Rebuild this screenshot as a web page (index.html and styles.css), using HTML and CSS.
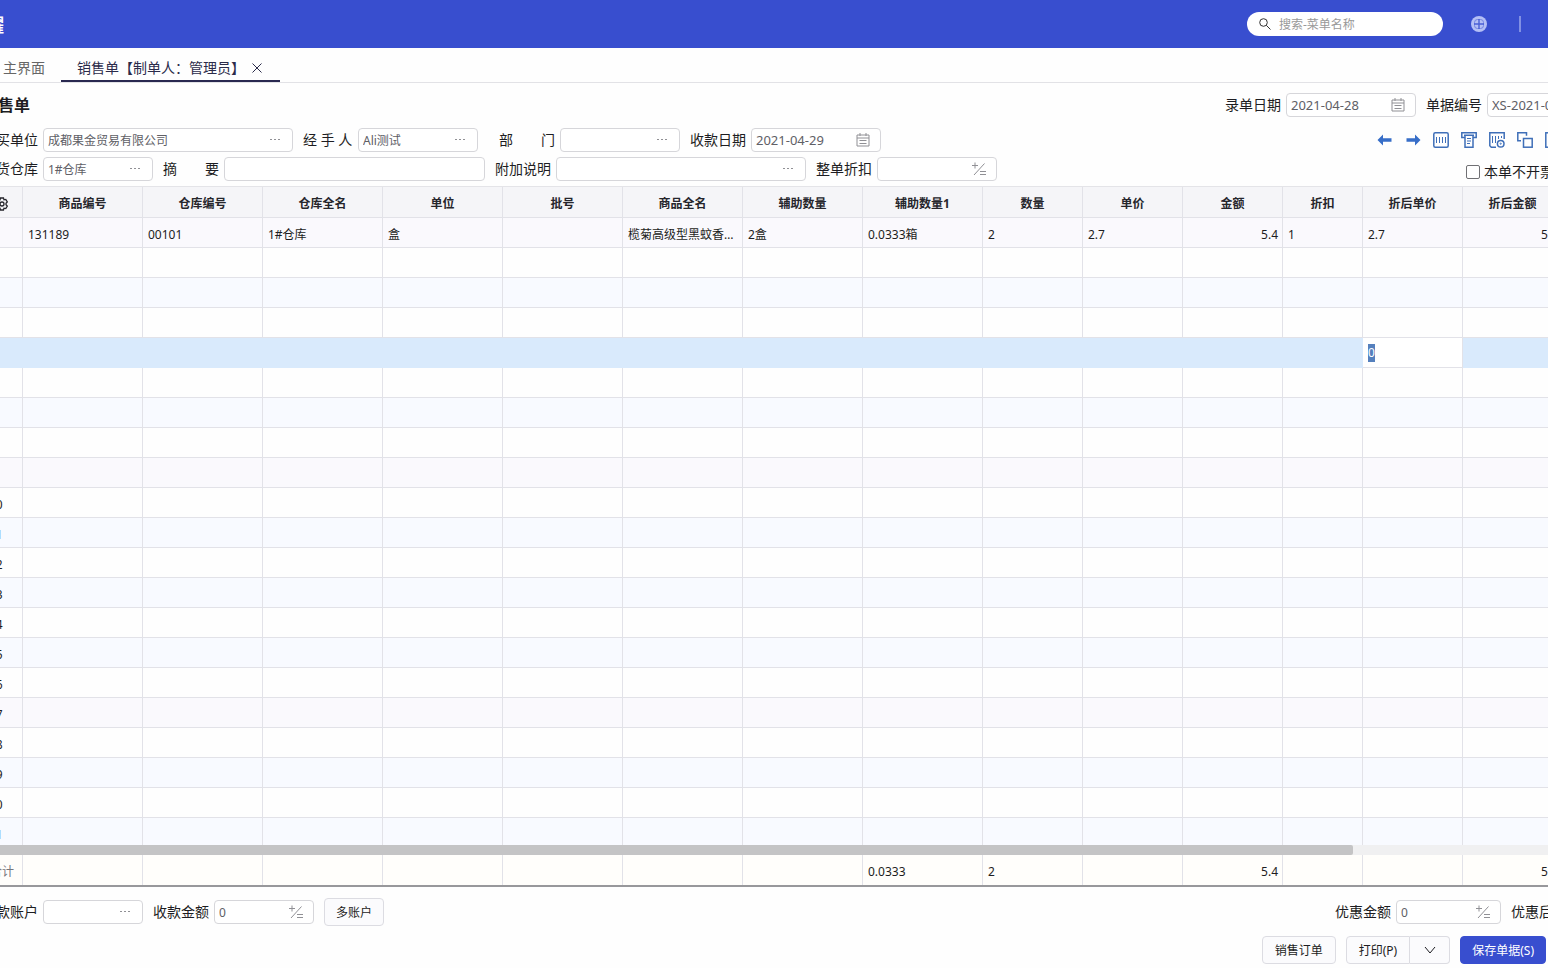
FILE: index.html
```html
<!DOCTYPE html>
<html lang="zh-CN">
<head>
<meta charset="utf-8">
<title>销售单</title>
<link rel="stylesheet" href="styles.css">
</head>
<body>
<svg class="sprite" aria-hidden="true">
  <symbol id="calendar" viewBox="0 0 14 14"><path d="M1 2h12v11H1zM1 5h12M4 0v3M10 0v3M3.500 7.500h7M3.500 10.500h7"/></symbol>
  <symbol id="calc" viewBox="0 0 14 14"><path d="M0 3.500h6M3 .5v6M2 13L12.500 1.500M8 9.500h6M8 12.500h6"/></symbol>
  <symbol id="dots" viewBox="0 0 14 14"><path d="M2 6.500h2M6 6.500h2M10 6.500h2"/></symbol>
</svg>
<div class="app">
  <header class="topbar">
    <div class="brand">云耀</div>
    <label class="search">
      <svg viewBox="0 0 12 12"><circle cx="4.500" cy="4.500" r="3.800"/><path d="M7.300 7.300L11.500 11.500"/></svg>
      <input type="text" placeholder="搜索-菜单名称" aria-label="搜索-菜单名称">
    </label>
    <button class="globe" aria-label="应用"><svg viewBox="0 0 16 16"><circle cx="8" cy="8" r="8"/><rect x="3.500" y="3.500" width="9" height="9" rx="3"/><path d="M8 3v10M3 8h10"/></svg></button>
    <span class="bar"></span>
  </header>

  <nav class="tabs">
    <button class="tab">主界面</button>
    <div class="tab active"><span>销售单【制单人：管理员】</span><button class="close" aria-label="关闭"><svg viewBox="0 0 10 10"><path d="M.5.5l9 9M9.500.5l-9 9"/></svg></button></div>
  </nav>

  <main class="content">
    <section class="line title-line">
      <h1>销售单</h1>
      <div class="line">
        <label class="field"><span>录单日期</span><span class="box w130 date"><input type="text" value="2021-04-28"><svg><use href="#calendar"/></svg></span></label>
        <label class="field"><span>单据编号</span><span class="box w130 date"><input type="text" value="XS-2021-04-28"></span></label>
      </div>
    </section>

    <section class="form">
      <div class="fields">
        <div class="line">
          <label class="field"><span>购买单位</span><span class="box w250"><input type="text" value="成都果金贸易有限公司"><svg><use href="#dots"/></svg></span></label>
          <label class="field"><span class="hand">经 手 人</span><span class="box w120"><input type="text" value="Ali测试"><svg><use href="#dots"/></svg></span></label>
          <label class="field dept"><span>部　　门</span><span class="box w120"><input type="text"><svg><use href="#dots"/></svg></span></label>
          <label class="field"><span>收款日期</span><span class="box w130 date"><input type="text" value="2021-04-29"><svg><use href="#calendar"/></svg></span></label>
        </div>
        <div class="line">
          <label class="field"><span>发货仓库</span><span class="box w110"><input type="text" value="1#仓库"><svg><use href="#dots"/></svg></span></label>
          <label class="field"><span>摘　　要</span><span class="box w261"><input type="text"></span></label>
          <label class="field"><span>附加说明</span><span class="box w250"><input type="text"><svg><use href="#dots"/></svg></span></label>
          <label class="field"><span>整单折扣</span><span class="box w120"><input type="text"><svg><use href="#calc"/></svg></span></label>
        </div>
      </div>
      <div class="side">
        <div class="tools">
          <button aria-label="上一单"><svg viewBox="0 0 16 16"><path class="solid" d="M.5 8L6 2.500v3.800h8.500v3.400H6v3.800z"/></svg></button>
          <button aria-label="下一单"><svg viewBox="0 0 16 16"><path class="solid" d="M15.500 8L10 2.500v3.800H1.500v3.400H10v3.800z"/></svg></button>
          <button aria-label="条码"><svg viewBox="0 0 16 16"><rect x=".8" y=".8" width="14.400" height="14.400" rx="1.500"/><path class="thin" d="M3.500 5v6M6.500 5v6M9.500 5v6M12.500 5v6"/></svg></button>
          <button aria-label="打印"><svg viewBox="0 0 16 16"><path d="M3.500 5.500H.8V.8h14.400v4.700h-2.700M3 3.300h10M4 3.500v11.700h8V3.500"/><path class="thin" d="M6 6.500h4M6 9h4M6 11.500h3"/></svg></button>
          <button aria-label="条码设置"><svg viewBox="0 0 16 16"><path d="M7 15.200H2.300L.8 13.700V.8h14.400V7"/><path class="thin" d="M3.500 4v7M6.500 4v7M9.500 4v3M12.500 4v2"/><circle cx="11.700" cy="11.700" r="3.300"/><circle class="thin" cx="11.700" cy="11.700" r=".6"/></svg></button>
          <button aria-label="复制"><svg viewBox="0 0 16 16"><path d="M4 8.700H.8V.8h8.700v3"/><rect x="6.500" y="6.500" width="8.700" height="8.700"/></svg></button>
          <button aria-label="单据"><svg viewBox="0 0 16 16"><rect x=".8" y=".8" width="14.400" height="14.400"/></svg></button>
        </div>
        <label class="check"><input type="checkbox">本单不开票</label>
      </div>
    </section>
  </main>

  <section class="grid">
    <div class="grid-body">
      <table>
        <colgroup><col class="c41"><col span="8" class="c120"><col span="3" class="c100"><col class="c80"><col span="3" class="c100"></colgroup>
        <thead><tr>
          <th><svg class="gear" viewBox="0 0 14 14"><path d="M5.500 1h3l.5 1.800 1.800-.4 1.500 2.500L11 6.300v1.400l1.300 1.400-1.500 2.500-1.800-.4-.5 1.800h-3L5 11.200l-1.800.4-1.500-2.500L3 7.700V6.300L1.700 4.900l1.500-2.500 1.800.4z"/><circle cx="7" cy="7" r="2"/></svg></th>
          <th>商品编号</th><th>仓库编号</th><th>仓库全名</th><th>单位</th><th>批号</th><th>商品全名</th><th>辅助数量</th><th>辅助数量1</th><th>数量</th><th>单价</th><th>金额</th><th>折扣</th><th>折后单价</th><th>折后金额</th><th></th>
        </tr></thead>
        <tbody id="rows">
          <tr><td>1</td><td>131189</td><td>00101</td><td>1#仓库</td><td>盒</td><td></td><td>榄菊高级型黑蚊香盘香</td><td>2盒</td><td>0.0333箱</td><td>2</td><td>2.7</td><td class="num">5.4</td><td>1</td><td>2.7</td><td class="num">5.4</td><td></td></tr>
        </tbody>
      </table>
    </div>
    <div class="scroll"><div class="thumb"></div></div>
    <table class="totals">
      <colgroup><col class="c41"><col span="8" class="c120"><col span="3" class="c100"><col class="c80"><col span="3" class="c100"></colgroup>
      <tbody><tr><th>合计</th><td></td><td></td><td></td><td></td><td></td><td></td><td></td><td>0.0333</td><td>2</td><td></td><td class="num">5.4</td><td></td><td></td><td class="num">5.4</td><td></td></tr></tbody>
    </table>
  </section>

  <footer class="footer">
    <div class="line">
      <label class="field"><span>收款账户</span><span class="box w100"><input type="text"><svg><use href="#dots"/></svg></span></label>
      <label class="field"><span>收款金额</span><span class="box w100"><input type="text" value="0"><svg><use href="#calc"/></svg></span></label>
      <button class="btn">多账户</button>
      <div class="line right">
        <label class="field"><span>优惠金额</span><span class="box w105"><input type="text" value="0"><svg><use href="#calc"/></svg></span></label>
        <span class="after">优惠后金额</span>
      </div>
    </div>
    <div class="line actions">
      <button class="btn">销售订单</button>
      <div class="split"><button class="btn">打印(P)</button><button class="btn more" aria-label="更多打印"><svg viewBox="0 0 12 8"><path d="M1 1l5 6 5-6"/></svg></button></div>
      <button class="btn primary">保存单据(S)</button>
    </div>
  </footer>
</div>
<script src="grid.js"></script>
</body>
</html>
```
FILE: styles.css
```css
* { box-sizing: border-box; }
html, body { height: 100%; }
body {
  margin: 0;
  overflow: hidden;
  background: #fefefe;
  color: #1d1d22;
  font: 12px/18px "Noto Sans", "Noto Sans CJK SC", sans-serif;
}
button, input { font: inherit; color: inherit; }
button { border: 0; padding: 0; background: none; }
input { min-width: 0; border: 0; padding: 0; outline: 0; background: none; }
svg { fill: none; stroke: currentColor; flex: none; }
.sprite { display: none; }

/* The sheet is wider than the window and scrolled a little to the right. */
.app {
  display: flex;
  flex-direction: column;
  height: 100%;
  margin: 0 -81px 0 -30px;
}

.topbar {
  display: flex;
  align-items: center;
  flex: none;
  height: 48px;
  padding: 0 108px 0 0;
  background: #384ecf;
}
.brand {
  display: flex;
  justify-content: flex-end;
  width: 34px;
  padding-top: 2px;
  white-space: nowrap;
  font-size: 18px;
  line-height: 24px;
  font-weight: 700;
  color: #fff;
}
.search {
  display: flex;
  align-items: center;
  gap: 8px;
  width: 196px;
  height: 24px;
  margin-left: auto;
  padding: 0 12px;
  border-radius: 12px;
  background: #fff;
}
.search svg { width: 12px; height: 12px; color: #333; }
.search input { flex: 1; padding-top: 2px; }
.search input::placeholder { color: #999; opacity: 1; }
.globe { width: 16px; height: 16px; margin-left: 28px; }
.globe svg { display: block; width: 16px; height: 16px; }
.globe circle { fill: #b4bff5; stroke: none; }
.globe path { stroke: #4a60d6; stroke-width: 1.4; }
.globe rect { stroke: #7283e0; stroke-width: 1; }
.bar { width: 2px; height: 16px; margin-left: 32px; background: #8190e4; }

.tabs {
  display: flex;
  flex: none;
  height: 35px;
  padding-left: 17px;
  border-bottom: 1px solid #e2e2e6;
  font-size: 14px;
}
.tab { display: flex; align-items: center; gap: 7px; height: 34px; padding: 6px 16px 0; color: #666; white-space: nowrap; }
.tab.active { width: 219px; padding-top: 8px; color: #2b2b4a; border-bottom: 2px solid #292850; }
.close svg { display: block; width: 10px; height: 10px; }

.content { flex: none; padding: 10px 12px 5px; }
.line { display: flex; align-items: center; gap: 10px; }
.title-line { justify-content: space-between; margin-bottom: 11px; }
h1 { margin: 0; font-size: 16px; line-height: 24px; font-weight: 700; }
.field { display: flex; align-items: center; gap: 5px; font-size: 14px; white-space: nowrap; }
.hand { width: 50px; }
.dept { padding-left: 11px; }
.box {
  display: flex;
  align-items: center;
  height: 24px;
  padding: 0 10px 0 4px;
  border: 1px solid #d6d6da;
  border-radius: 4px;
  background: #fff;
  color: #606066;
  font-size: 12px;
}
.box input { flex: 1; width: 0; padding-top: 2px; }
.box svg { width: 14px; height: 14px; color: #909095; }
.box.date { font-size: 13px; }
.date input { padding-top: 0; }
.w100 { width: 100px; }
.w105 { width: 105px; }
.w110 { width: 110px; }
.w120 { width: 120px; }
.w130 { width: 130px; }
.w250 { width: 250px; }
.w261 { width: 261px; }

.form { display: flex; justify-content: space-between; }
.fields { display: flex; flex-direction: column; gap: 5px; }
.side { display: flex; flex-direction: column; gap: 11px; width: 240px; }
.tools { display: flex; gap: 12px; height: 24px; align-items: center; color: #3f6fb8; }
.tools svg { display: block; width: 16px; height: 16px; stroke-width: 1.5; }
.tools .solid { fill: #376ec8; stroke: none; }
.tools .thin { stroke-width: 1; }
.check { display: flex; align-items: center; gap: 4px; padding-left: 89px; font-size: 14px; white-space: nowrap; }
.check input {
  width: 14px;
  height: 14px;
  margin: 0;
  appearance: none;
  border: 1px solid #707074;
  border-radius: 2px;
  background: #fff;
}

.grid { display: flex; flex-direction: column; flex: 1; min-height: 0; padding-left: 12px; border-top: 1px solid #e4e4e8; border-bottom: 2px solid #98989b; }
.grid-body { flex: 1; min-height: 0; overflow: hidden; }
table { width: 1681px; table-layout: fixed; border-collapse: separate; border-spacing: 0; }
.c41 { width: 41px; }
.c80 { width: 80px; }
.c100 { width: 100px; }
.c120 { width: 120px; }
th, td {
  height: 30px;
  padding: 0 5px;
  border-right: 1px solid #e2e2e8;
  border-bottom: 1px solid #e2e2e8;
  text-align: left;
  white-space: nowrap;
  overflow: hidden;
  text-overflow: ellipsis;
}
thead th { height: 31px; padding-top: 3px; text-align: center; font-weight: 700; background: #f5f5f8; color: #26262c; }
td { padding-top: 4px; }
td:first-child { padding-left: 7px; }
tbody tr:nth-child(odd) { background: #f8faff; }
tbody tr:nth-child(8n+1) { background: #faf9fd; }
td.num { text-align: right; padding-right: 4px; }
.gear { display: block; width: 14px; height: 14px; margin: 0 auto; stroke-width: 1.3; }
#rows tr.current { background: #d9eafc; }
.current td { border-color: #d9eafc; }
.current td.edit { padding: 1px 5px 0; background: #fff; border-color: #e2e2e8; }
.edit input { display: block; width: 100%; height: 18px; }
.edit input::selection { background: #5580bd; color: #fff; }
.scroll { flex: none; height: 10px; background: #f0f0f1; }
.thumb { width: 1371px; height: 10px; background: #c4c4c5; border-radius: 0 2px 2px 0; }
.totals { flex: none; }
.totals tbody tr { background: #fffefb; }
.totals th { padding: 4px 5px 0; text-align: center; font-weight: 400; color: #77777c; }
.totals th, .totals td { border-bottom: 0; }

.footer { display: flex; flex-direction: column; gap: 10px; flex: none; padding: 11px 12px 4px; }
.right { margin-left: auto; }
.after { width: 106px; font-size: 14px; }
.btn {
  height: 28px;
  padding: 2px 11px 0;
  border: 1px solid #dcdce2;
  border-radius: 4px;
  background: #fbfbfd;
  white-space: nowrap;
}
.actions { justify-content: flex-end; padding-right: 71px; }
.actions .btn { padding: 2px 12px 0; }
.split { display: flex; }
.split .btn:first-child { border-radius: 4px 0 0 4px; }
.actions .more { width: 40px; padding: 0; border-left: 0; border-radius: 0 4px 4px 0; }
.more svg { display: block; width: 12px; height: 8px; margin: 0 auto; }
.actions .primary { padding: 2px 11px 0; border-color: #384ecf; background: #384ecf; color: #fff; }
```
FILE: grid.js
```js
const body = document.getElementById('rows');
for (let n = 2; n <= 24; n++) {
  const row = body.insertRow();
  for (let c = 0; c < 16; c++) {
    const cell = row.insertCell();
    if (c === 0) cell.textContent = n;
    if (n === 5 && c === 13) {
      cell.className = 'edit';
      const input = document.createElement('input');
      input.type = 'text';
      input.value = '0';
      input.setAttribute('aria-label', '折后单价');
      cell.append(input);
      input.focus();
      input.select();
    }
  }
  if (n === 5) row.className = 'current';
}
```
